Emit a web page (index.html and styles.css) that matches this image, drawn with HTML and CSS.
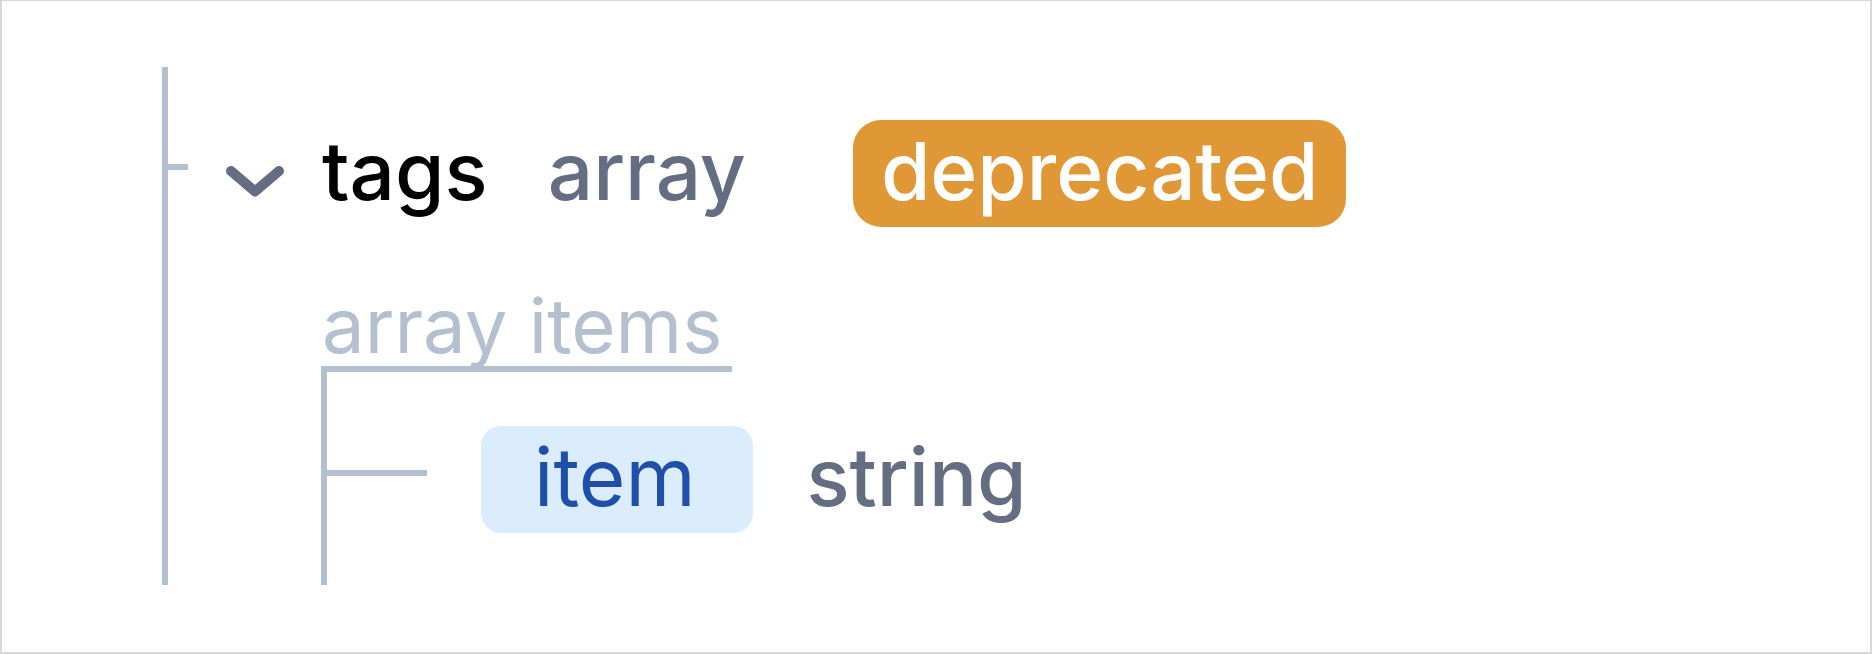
FILE: index.html
```html
<!DOCTYPE html>
<html lang="en">
<head>
<meta charset="utf-8">
<title>Schema</title>
<link rel="stylesheet" href="styles.css">
</head>
<body>
<main class="page">
  <section class="tree">
    <div class="row">
      <span class="tick"></span>
      <button class="toggle" type="button" aria-label="Collapse tags" aria-expanded="true">
        <svg class="chevron" viewBox="0 0 58 32" aria-hidden="true"><path d="M5 5 29 25.500 53 5" /></svg>
      </button>
      <span class="name">tags</span>
      <span class="type type-array">array</span>
      <span class="badge">deprecated</span>
    </div>
    <div class="children">
      <div class="caption">array items</div>
      <div class="branch">
        <div class="row">
          <span class="tick tick-long"></span>
          <span class="item">item</span>
          <span class="type">string</span>
        </div>
      </div>
    </div>
  </section>
</main>
</body>
</html>
```
FILE: styles.css
```css
* { box-sizing: border-box; }

body {
  margin: 0;
  background: #fff;
  font-family: Inter, "Liberation Sans", sans-serif;
  font-size: 80px;
  font-weight: 500;
  line-height: 101px;
  color: #000;
}

.page {
  min-height: 100vh;
  padding: 66px 160px;
  border: 2px solid #d8d8d8;
  border-top-width: 1px;
}

.tree {
  padding-top: 53px;
  border-left: 6px solid #b4bfcf;
}

.row {
  display: flex;
  align-items: flex-start;
  white-space: nowrap;
}

.tick {
  flex: none;
  width: 20px;
  height: 6px;
  margin-top: 44px;
  background: #b4bfcf;
}

.tick-long { width: 100px; }

.toggle {
  flex: none;
  display: flex;
  margin: 46px 38px 0;
  padding: 0;
  border: 0;
  background: none;
  cursor: pointer;
}

.chevron {
  width: 58px;
  height: 32px;
  fill: none;
  stroke: #646d82;
  stroke-width: 10;
  stroke-linecap: round;
  stroke-linejoin: round;
}

.type {
  margin-left: 53px;
  color: #646d82;
}

.type-array { margin-left: 60px; }

.badge {
  margin-left: 107px;
  padding: 0 28px 6px;
  border-radius: 28px;
  background: #e09736;
  color: #fff;
}

.children {
  display: flex;
  flex-direction: column;
  align-items: flex-start;
  margin-left: 153px;
  padding-top: 57px;
}

.caption {
  border-bottom: 6px solid #b4bfcf;
  padding: 0 10px 0 1px;
  color: #b4bfcf;
  font-size: 76px;
  font-weight: 400;
  line-height: 82px;
}

.branch {
  padding: 54px 0 52px;
  border-left: 6px solid #b4bfcf;
}

.item {
  margin-left: 54px;
  padding: 0 58px 6px 53px;
  border-radius: 20px;
  background: #dbecfc;
  color: #1f4fa9;
  font-weight: 400;
}
```
